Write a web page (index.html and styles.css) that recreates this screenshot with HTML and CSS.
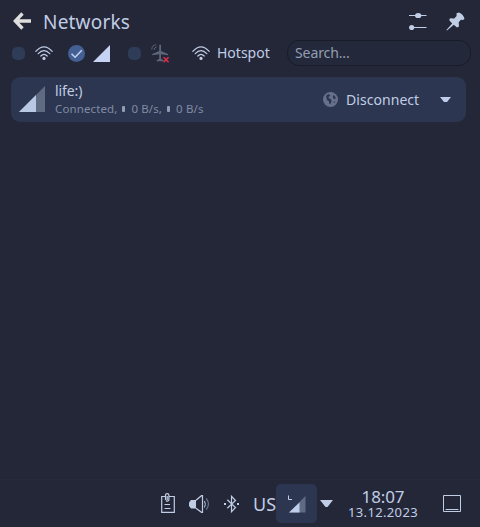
FILE: index.html
```html
<!DOCTYPE html>
<html lang="en">
<head>
<meta charset="utf-8">
<title>Networks</title>
<link rel="stylesheet" href="styles.css">
</head>
<body>
<svg width="0" height="0" class="defs" aria-hidden="true">
  <symbol id="wifi" viewBox="0 0 18 15">
    <g fill="none" stroke="currentColor" stroke-width="1.2" stroke-linecap="round">
      <path d="M.8 5.3Q9-3.7 17.2 5.3M3.2 7.7Q9 1.4 14.8 7.7M5.8 10Q9 6.6 12.2 10"/>
    </g>
    <circle cx="9" cy="12.4" r="1.6" fill="currentColor"/>
  </symbol>
</svg>
<main class="popup">
  <header class="header">
    <svg class="back" width="19" height="18" viewBox="0 0 19 18"><path d="M9.500 1.500 2.300 9l7.200 7.500M2.500 9H18" fill="none" stroke="#dedede" stroke-width="3.300"/></svg>
    <h1 class="title">Networks</h1>
    <svg class="settings" width="18" height="18" viewBox="0 0 18 18"><path d="M0 3.500h17.500M0 15.500h17.500" stroke="currentColor"/><ellipse cx="9.200" cy="3.500" rx="3.200" ry="2.600" fill="currentColor"/><circle cx="2.700" cy="15.500" r="2.600" fill="currentColor"/></svg>
    <svg class="pin" width="19" height="19" viewBox="0 0 19 19"><path d="M10.500 1.200 13 .5q4 1.500 5.500 6.300l-1.400 1.300-2.200-.3-2.200 2.500.3 4.300-2 1-3.200-2.800L1 18.500l-.6-.6 5.800-6.300-3-3.400.8-1.900 4.300.3L10.600 4z" fill="currentColor"/></svg>
  </header>
  <div class="toolbar">
    <span class="check"></span>
    <svg class="wifi" width="18" height="15"><use href="#wifi"/></svg>
    <span class="check on"><svg width="17" height="17" viewBox="0 0 17 17"><path d="m3.500 8.700 3.600 3.500 6.700-7" fill="none" stroke="#c5d3ed" stroke-width="1.500"/></svg></span>
    <svg class="mobile" width="17" height="17" viewBox="0 0 17 17"><path d="M0 17 17 0v17z" fill="#c7d3f5"/></svg>
    <span class="check third"></span>
    <svg class="plane" width="19" height="19" viewBox="0 0 19 19">
      <path d="M8.200 1q1-1 1.800 0v6l7 3v1.300l-7-1v4.500l2.500 1.500v.9H5.700v-.9l2.500-1.500v-4.500l-7 1V10l7-3z" fill="#5c6579"/>
      <path d="M.8 5.500Q1 1 5.200.8M3 6q.2-2.600 2.600-3" fill="none" stroke="#5c6579"/>
      <path d="m12.600 13.300 5 5m0-5-5 5" stroke="#dc3048" stroke-width="1.600"/>
    </svg>
    <svg class="wifi hot" width="18" height="15"><use href="#wifi"/></svg>
    <span class="hotspot">Hotspot</span>
    <div class="search">Search...</div>
  </div>
  <section class="network">
    <svg class="signal" width="26" height="26" viewBox="0 0 26 26"><path d="M0 26 26 0v26z" fill="#5f6a83"/><path d="M0 26 17 9v17z" fill="#bac9e3"/></svg>
    <div class="info">
      <div class="name">life:)</div>
      <div class="status"><span>Connected,</span><i class="rate"></i><span>0 B/s,</span><i class="rate"></i><span>0 B/s</span></div>
    </div>
    <svg class="globe" width="15" height="15" viewBox="0 0 15 15"><circle cx="7.500" cy="7.500" r="7.500" fill="#65718a"/><path d="M3 4 5 2.200l1.800.3.4 1.400-1.700.9.300 1.500 2.200 1 .6 2-1.300 2.900-1.200-.7-.2-2.300L4 8zM10 3l2 1.300.8 2-.9 1-2-1.200zM10.500 9.800l1.800-.6-1.200 2z" fill="#2c3650"/></svg>
    <span class="disconnect">Disconnect</span>
    <svg class="arrow" width="11" height="6" viewBox="0 0 11 6"><path d="M0 0h11L7 5H4z" fill="#c0cdea"/></svg>
  </section>
</main>
<footer class="panel">
  <svg class="clip" width="14" height="20" viewBox="0 0 14 20"><path d="M4 3.500H.7v15.800h12.600V3.500H8.500M3.500 11.500H9M3.500 15.500h6M4.500 7V2.200Q4.500.6 6.200.6T7.900 2.200v5Q6.500 9 5 7.500M6.200 3v4" fill="none" stroke="currentColor" stroke-width="1.200"/></svg>
  <svg class="volume" width="21" height="18" viewBox="0 0 21 18"><path d="M0 7.500 2 5h5v8.500H2L0 11z" fill="currentColor"/><path d="m7 5.200 5.500-4.500h1v16.600h-1L7 13.300" fill="none" stroke="currentColor" stroke-width="1.200"/><path d="M15.500 6q1.700 3.200 0 6.500" fill="none" stroke="currentColor"/><path d="M17.200 3.500q4.500 5.500 0 11" fill="none" stroke="#68758e" stroke-width="1.200"/></svg>
  <svg class="bluetooth" width="15" height="18" viewBox="0 0 15 18"><path d="m3.300 4.700 8.200 7.800-4 4.200V1.300l4 4.200-8.200 7.800" fill="none" stroke="currentColor" stroke-width="1.200"/><path d="M0 8h2v2H0zm13 0h2v2h-2z" fill="currentColor"/></svg>
  <span class="layout">US</span>
  <span class="task"><svg width="18" height="18" viewBox="0 0 18 18"><path d="M1 17.500 17.500 1v16.500z" fill="#5f6a83"/><path d="m1 17.500 10.500-10v10z" fill="#c0cdea"/><path d="M.5.500v4H4" fill="none" stroke="#c0cdea"/></svg></span>
  <svg class="tray" width="13" height="7" viewBox="0 0 13 7"><path d="M0 0h13L7.500 7h-2z" fill="currentColor"/></svg>
  <div class="clock"><div class="time">18:07</div><div class="date">13.12.2023</div></div>
  <svg class="desktop" width="18" height="17" viewBox="0 0 18 17"><path d="M.5.500h17v16H.5zM2.500 14.500h13" fill="none" stroke="currentColor"/></svg>
</footer>
</body>
</html>
```
FILE: styles.css
```css
* { box-sizing: border-box; }
body {
  margin: 0;
  height: 527px;
  display: flex;
  flex-direction: column;
  overflow: hidden;
  background: #242738;
  color: #c0cde5;
  font-family: "Noto Sans", sans-serif;
  white-space: nowrap;
}
svg { display: block; flex: none; }
.defs { position: absolute; }
.popup { flex: 1; }

.header { height: 39px; display: flex; align-items: flex-start; padding: 12px 15px 0 13px; }
.title { margin: -3px 0 0 11px; font-size: 19px; line-height: 26px; font-weight: 400; letter-spacing: 0.2px; }
.settings { margin-left: auto; }
.pin { margin-left: 19px; }

.toolbar { height: 28px; display: flex; align-items: center; padding-left: 12px; }
.check { width: 13px; height: 13px; border-radius: 5px; background: #2e3c58; flex: none; }
.check.on { width: 17px; height: 17px; border-radius: 50%; background: #435f94; margin-left: 15px; }
.wifi { margin-left: 10px; }
.mobile { margin-left: 8px; }
.check.third { margin-left: 18px; }
.plane { margin-left: 10px; }
.wifi.hot { margin-left: 22px; }
.hotspot { width: 70px; margin-left: 7px; font-size: 14px; line-height: 20px; }
.search {
  width: 184px;
  height: 26px;
  flex: none;
  padding-left: 7px;
  border: 1px solid #191c28;
  border-radius: 12px;
  background: #23283a;
  color: #939db3;
  font-size: 14px;
  line-height: 24px;
  letter-spacing: -0.1px;
}

.network {
  width: 455px;
  height: 45px;
  margin: 10px 0 0 11px;
  padding: 0 15px 0 8px;
  display: flex;
  align-items: center;
  border-radius: 9px;
  background: #2c3650;
}
.signal { margin-top: -2px; }
.info { margin: -1px 0 0 10px; }
.name { font-size: 14px; line-height: 18px; letter-spacing: -0.1px; }
.status { display: flex; align-items: center; color: #808ba3; font-size: 11.5px; line-height: 17px; letter-spacing: 0.12px; }
.rate { width: 3px; height: 6px; margin: 1px 6px 0 5px; background: #929db5; border-radius: 1px; }
.globe { margin-left: auto; }
.disconnect { width: 73px; margin-left: 8px; font-size: 14px; letter-spacing: 0.05px; }
.arrow { margin-left: 21px; }

.panel { height: 48px; display: flex; align-items: center; padding: 0 0 0 161px; border-top: 1px solid #282b3b; }
.clip { margin-top: -2px; }
.volume { margin-left: 14px; }
.bluetooth { margin-left: 14px; }
.layout { width: 23px; margin-left: 14px; font-size: 18px; }
.task { width: 41px; height: 39px; flex: none; display: flex; align-items: center; justify-content: center; border-radius: 5px; background: #2c3650; }
.tray { margin-left: 3px; }
.clock { width: 72px; margin: -1px 0 0 14px; text-align: center; }
.time { font-size: 17px; line-height: 17px; letter-spacing: -0.1px; }
.date { font-size: 13px; line-height: 14px; letter-spacing: 0.35px; }
.desktop { margin-left: 24px; }
```
